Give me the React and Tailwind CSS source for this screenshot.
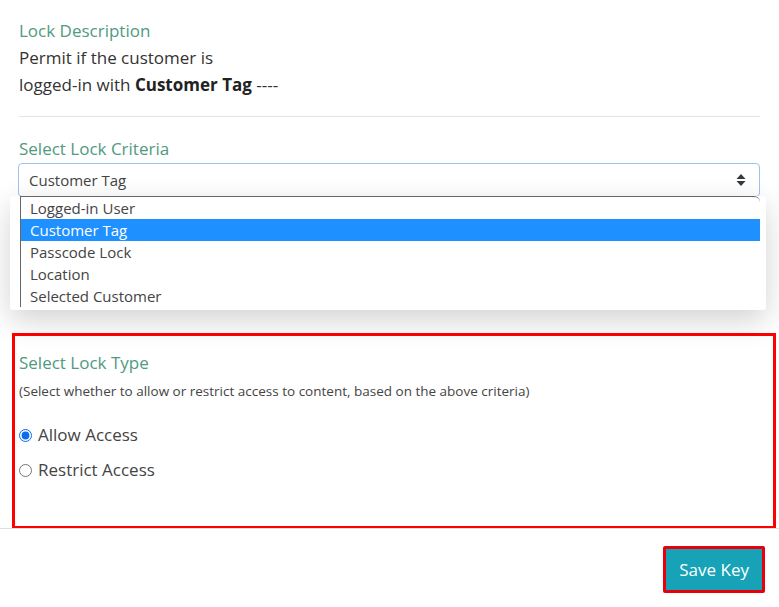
import React from "react";

const GREEN = "text-[#4f9a80]";

function SortArrows() {
  return (
    <svg width="10" height="14" viewBox="0 0 10 14" className="text-[#343a40]">
      <path d="M5 1 L9.5 6 H0.5 Z" fill="currentColor" />
      <path d="M5 13 L9.5 8 H0.5 Z" fill="currentColor" />
    </svg>
  );
}

const OPTIONS = ["Logged-in User", "Customer Tag", "Passcode Lock", "Location", "Selected Customer"];

export default function App() {
  return (
    <div
      className="w-[779px] h-[607px] bg-white relative overflow-hidden text-[#333]"
      style={{ fontFamily: '"Open Sans", "Noto Sans", Arial, sans-serif' }}
    >
      {/* Description */}
      <div className="px-[19px] pt-[18px]">
        <h3 className={`text-[17px] leading-[26px] ${GREEN}`}>Lock Description</h3>
        <p className="text-[17px] leading-[27px] text-[#333]">
          Permit if the customer is
          <br />
          logged-in with <b className="font-bold text-[#222]">Customer Tag</b> ----
        </p>
        <div className="mt-[18px] border-t border-[#e3e3e3]" />

        {/* Criteria */}
        <h3 className={`mt-[19px] text-[17px] leading-[26px] ${GREEN}`}>Select Lock Criteria</h3>
        <div className="relative mt-[1px] -ml-[1px]">
          <div className="h-[34px] w-[742px] border border-[#9cc3ee] rounded-[4px] flex items-center justify-between pl-[10px] pr-[13px] text-[15px] text-[#444]">
            <span>Customer Tag</span>
            <SortArrows />
          </div>

          {/* Open list */}
          <div className="absolute left-[-8px] top-[33px] w-[756px] h-[114px] bg-white rounded-[3px] shadow-[0_10px_30px_rgba(0,0,0,0.18)] z-10">
            <div className="ml-[10px] mr-[6px] border-l border-t border-[#666] rounded-tr-[6px]">
              {OPTIONS.map((o) => (
                <div
                  key={o}
                  className={`h-[22px] leading-[22px] pl-[9px] text-[15px] ${
                    o === "Customer Tag" ? "bg-[#1e90ff] text-white" : "text-[#444]"
                  }`}
                >
                  {o}
                </div>
              ))}
            </div>
          </div>
        </div>
      </div>

      {/* Lock type (highlighted) */}
      <div className="mt-[136px] ml-[12px] w-[764px] h-[196px] border-[3px] border-[#ff0000] pl-[4px] pt-[14px]">
        <h3 className={`text-[17px] leading-[26px] ${GREEN}`}>Select Lock Type</h3>
        <p className="mt-[6px] text-[13.5px] leading-[18px] text-[#444]">
          (Select whether to allow or restrict access to content, based on the above criteria)
        </p>
        <div className="mt-[24px] flex flex-col gap-[13px]">
          <label className="flex items-center gap-[6px] text-[17px] leading-[22px] text-[#444]">
            <input type="radio" name="lt" defaultChecked className="w-[13px] h-[13px] m-0 accent-[#0b6cf0]" />
            Allow Access
          </label>
          <label className="flex items-center gap-[6px] text-[17px] leading-[22px] text-[#444]">
            <input type="radio" name="lt" className="w-[13px] h-[13px] m-0" />
            Restrict Access
          </label>
        </div>
      </div>

      {/* Footer */}
      <div className="-mt-[1px] border-t border-[#dedede] flex justify-end pr-[14px] pt-[17px]">
        <div className="border-[3px] border-[#e8000b] rounded-[2px]">
          <button className="h-[41px] px-[13px] bg-[#17a2b8] text-white text-[17px] leading-[41px]">Save Key</button>
        </div>
      </div>
    </div>
  );
}
